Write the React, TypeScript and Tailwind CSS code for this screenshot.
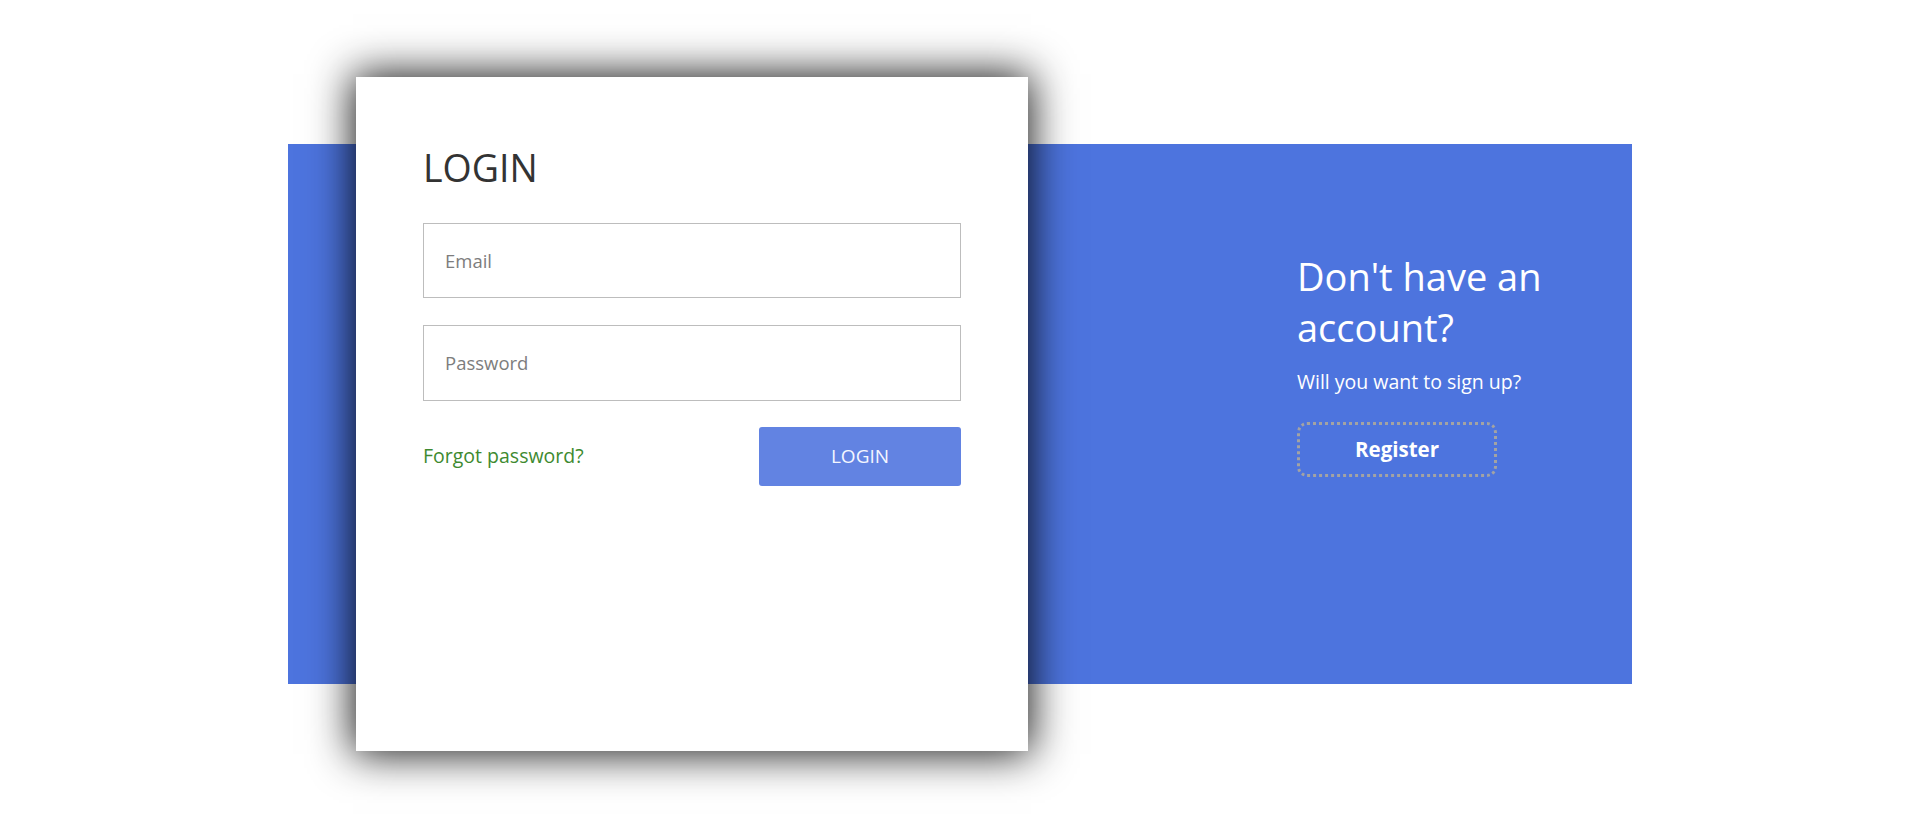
import React from "react";

const font = { fontFamily: '"Open Sans", "Noto Sans", sans-serif' };

const LoginCard = () => {
  return (
    <div className="ml-[68px] h-[674px] w-[672px] shrink-0 bg-white px-[67px] pt-[69px] shadow-[0_0_40px_3px_rgba(0,0,0,0.9)]">
      <h1 className="text-[37.5px] leading-[44px] font-normal text-[#333333]">LOGIN</h1>
      <input
        type="email"
        placeholder="Email"
        className="mt-[33px] block h-[75px] w-full border border-[#bdbdbd] px-[21px] text-[18.5px] text-[#333] outline-none placeholder:text-[#7d7d7d]"
      />
      <input
        type="password"
        placeholder="Password"
        className="mt-[27px] block h-[76px] w-full border border-[#bdbdbd] px-[21px] text-[18.5px] text-[#333] outline-none placeholder:text-[#7d7d7d]"
      />
      <div className="mt-[26px] flex items-center justify-between">
        <a href="#" className="text-[19.5px] text-[#3e8a30] no-underline">
          Forgot password?
        </a>
        <button className="h-[59px] w-[202px] rounded-[3px] bg-[#6283e2] text-[19px] text-[#f4f6ff]">
          LOGIN
        </button>
      </div>
    </div>
  );
};

const SignUp = () => {
  return (
    <div className="ml-[269px] mt-[107px] self-start text-white">
      <h2 className="text-[38px] leading-[51px] font-normal">
        Don't have an
        <br />
        account?
      </h2>
      <p className="mt-[16px] text-[19.5px] leading-[26px]">Will you want to sign up?</p>
      <button className="mt-[27px] flex h-[55px] w-[200px] items-center justify-center rounded-[10px] border-[3px] border-dotted border-[#a3a3a3] text-[20.5px] font-bold text-white">
        Register
      </button>
    </div>
  );
};

export default function App() {
  return (
    <div style={font} className="flex h-[827px] w-full items-center justify-center bg-white">
      <div className="flex h-[540px] w-[1344px] items-center bg-[#4d74de]">
        <LoginCard />
        <SignUp />
      </div>
    </div>
  );
}
